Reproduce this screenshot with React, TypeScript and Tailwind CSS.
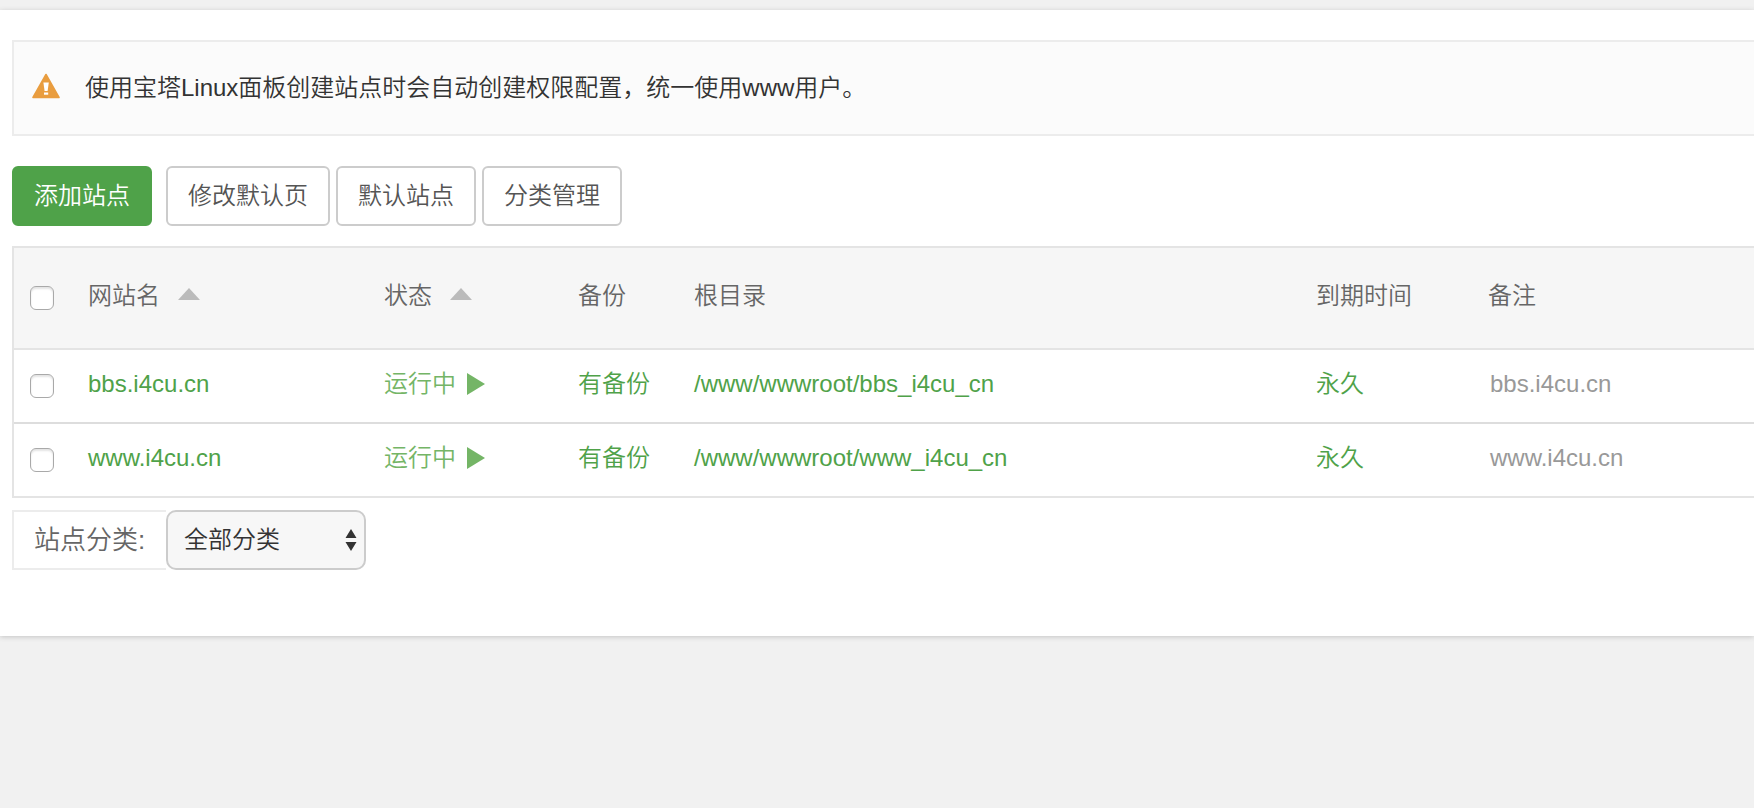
import React, { useState } from "react";

type Site = {
  id: number;
  name: string;
  path: string;
  note: string;
};

const sites: Site[] = [
  { id: 1, name: "bbs.i4cu.cn", path: "/www/wwwroot/bbs_i4cu_cn", note: "bbs.i4cu.cn" },
  { id: 2, name: "www.i4cu.cn", path: "/www/wwwroot/www_i4cu_cn", note: "www.i4cu.cn" },
];

const WarningIcon = () => (
  <svg width="28" height="26" viewBox="0 0 28 26" className="mb-1 shrink-0" aria-hidden="true">
    <path d="M14 1.5 L27 24.5 H1 Z" fill="#e99d3f" stroke="#e99d3f" strokeWidth="1.6" strokeLinejoin="round" />
    <path d="M11.4 9.5 H16.8 L15.6 18 H12.6 Z" fill="#fff" />
    <rect x="12" y="19.5" width="4.2" height="2.2" fill="#fff" />
  </svg>
);

const SortIcon = () => (
  <svg width="22" height="12" viewBox="0 0 22 12" className="mb-1" aria-hidden="true">
    <path d="M11 0 L22 12 H0 Z" fill="#bbb" />
  </svg>
);

const PlayIcon = () => (
  <svg width="18" height="22" viewBox="0 0 18 22" aria-hidden="true">
    <path d="M0 0 L18 11 L0 22 Z" fill="#74b566" />
  </svg>
);

const Checkbox = ({ label, checked, onChange }: { label: string; checked: boolean; onChange: () => void }) => (
  <input
    type="checkbox"
    aria-label={label}
    checked={checked}
    onChange={onChange}
    className="block w-6 h-6 appearance-none rounded-md border border-[#a9a9a9] bg-white shadow-[inset_0_2px_2px_#e4e4e4] checked:bg-[#4fa249]"
  />
);

const ToolButton = ({ children }: { children: React.ReactNode }) => (
  <button
    type="button"
    className="h-[60px] px-5 rounded-md border-2 border-[#ccc] bg-white text-[#555] whitespace-nowrap"
  >
    {children}
  </button>
);

const SortHead = ({ children }: { children: React.ReactNode }) => (
  <button type="button" className="flex items-center gap-[18px] font-[350]">
    {children}
    <SortIcon />
  </button>
);

const App: React.FC = () => {
  const [selected, setSelected] = useState<number[]>([]);

  const toggle = (id: number) => {
    setSelected((prev) => (prev.includes(id) ? prev.filter((x) => x !== id) : [...prev, id]));
  };

  const toggleAll = () => {
    setSelected(selected.length === sites.length ? [] : sites.map((s) => s.id));
  };

  return (
    <div className="min-h-screen pt-[10px] bg-[#f1f1f1] font-['Liberation_Sans','Noto_Sans_CJK_SC',sans-serif] font-[350] text-2xl text-[#666]">
      <main className="pt-[30px] pl-3 pb-[66px] bg-white shadow-[0_1px_5px_#c4c4c4]">
        <div className="h-24 flex items-center gap-[25px] pl-[18px] border-2 border-r-0 border-[#ececec] bg-[#fbfbfb] text-[#333]">
          <WarningIcon />
          <p>使用宝塔Linux面板创建站点时会自动创建权限配置，统一使用www用户。</p>
        </div>

        <div className="mt-[30px] flex gap-[6px]">
          <button
            type="button"
            className="h-[60px] mr-2 px-5 rounded-md border-2 border-[#4fa249] bg-[#4fa249] text-white whitespace-nowrap"
          >
            添加站点
          </button>
          <ToolButton>修改默认页</ToolButton>
          <ToolButton>默认站点</ToolButton>
          <ToolButton>分类管理</ToolButton>
        </div>

        <div className="mt-5 border-2 border-r-0 border-[#e4e4e4]">
          <table className="w-full table-fixed text-left">
            <thead>
              <tr className="h-[101px] border-b-2 border-[#e4e4e4] bg-[#f6f6f6] [&>th]:pl-4 [&>th]:font-[350] [&>th+th]:pb-1">
                <th className="w-[58px]">
                  <Checkbox label="全选" checked={selected.length === sites.length} onChange={toggleAll} />
                </th>
                <th className="w-[296px]">
                  <SortHead>网站名</SortHead>
                </th>
                <th className="w-[194px]">
                  <SortHead>状态</SortHead>
                </th>
                <th className="w-[116px]">备份</th>
                <th className="w-[622px]">根目录</th>
                <th className="w-[172px]">到期时间</th>
                <th>备注</th>
              </tr>
            </thead>
            <tbody className="text-[#4fa249]">
              {sites.map((site) => (
                <tr
                  key={site.id}
                  className="h-[74px] border-b-2 border-[#ddd] last:h-[73px] last:border-b-0 [&>td]:pl-4 [&>td+td]:pb-1"
                >
                  <td>
                    <Checkbox
                      label={site.name}
                      checked={selected.includes(site.id)}
                      onChange={() => toggle(site.id)}
                    />
                  </td>
                  <td>
                    <a href="#">{site.name}</a>
                  </td>
                  <td>
                    <a href="#" className="flex items-center gap-[11px] text-[#74b566]">
                      运行中
                      <PlayIcon />
                    </a>
                  </td>
                  <td>
                    <a href="#">有备份</a>
                  </td>
                  <td>
                    <a href="#">{site.path}</a>
                  </td>
                  <td>
                    <a href="#">永久</a>
                  </td>
                  <td className="text-[#999]">
                    <span className="px-[2px]">{site.note}</span>
                  </td>
                </tr>
              ))}
            </tbody>
          </table>
        </div>

        <div className="mt-3 flex">
          <label
            htmlFor="category"
            className="h-[60px] w-[154px] flex items-center pl-5 border-2 border-r-0 border-[#ececec] text-[26px]"
          >
            站点分类:
          </label>
          <div className="relative">
            <select
              id="category"
              className="h-[60px] w-[200px] pl-4 appearance-none rounded-[10px] border-2 border-[#ccc] bg-[#f7f7f7] text-[#333]"
            >
              <option>全部分类</option>
              <option>默认分类</option>
            </select>
            <svg
              width="12"
              height="22"
              viewBox="0 0 12 22"
              className="absolute right-[9px] top-[19px] pointer-events-none"
              aria-hidden="true"
            >
              <path d="M6 0 L11.5 9 H0.5 Z M6 22 L11.5 13 H0.5 Z" fill="#333" />
            </svg>
          </div>
        </div>
      </main>
    </div>
  );
};

export default App;
